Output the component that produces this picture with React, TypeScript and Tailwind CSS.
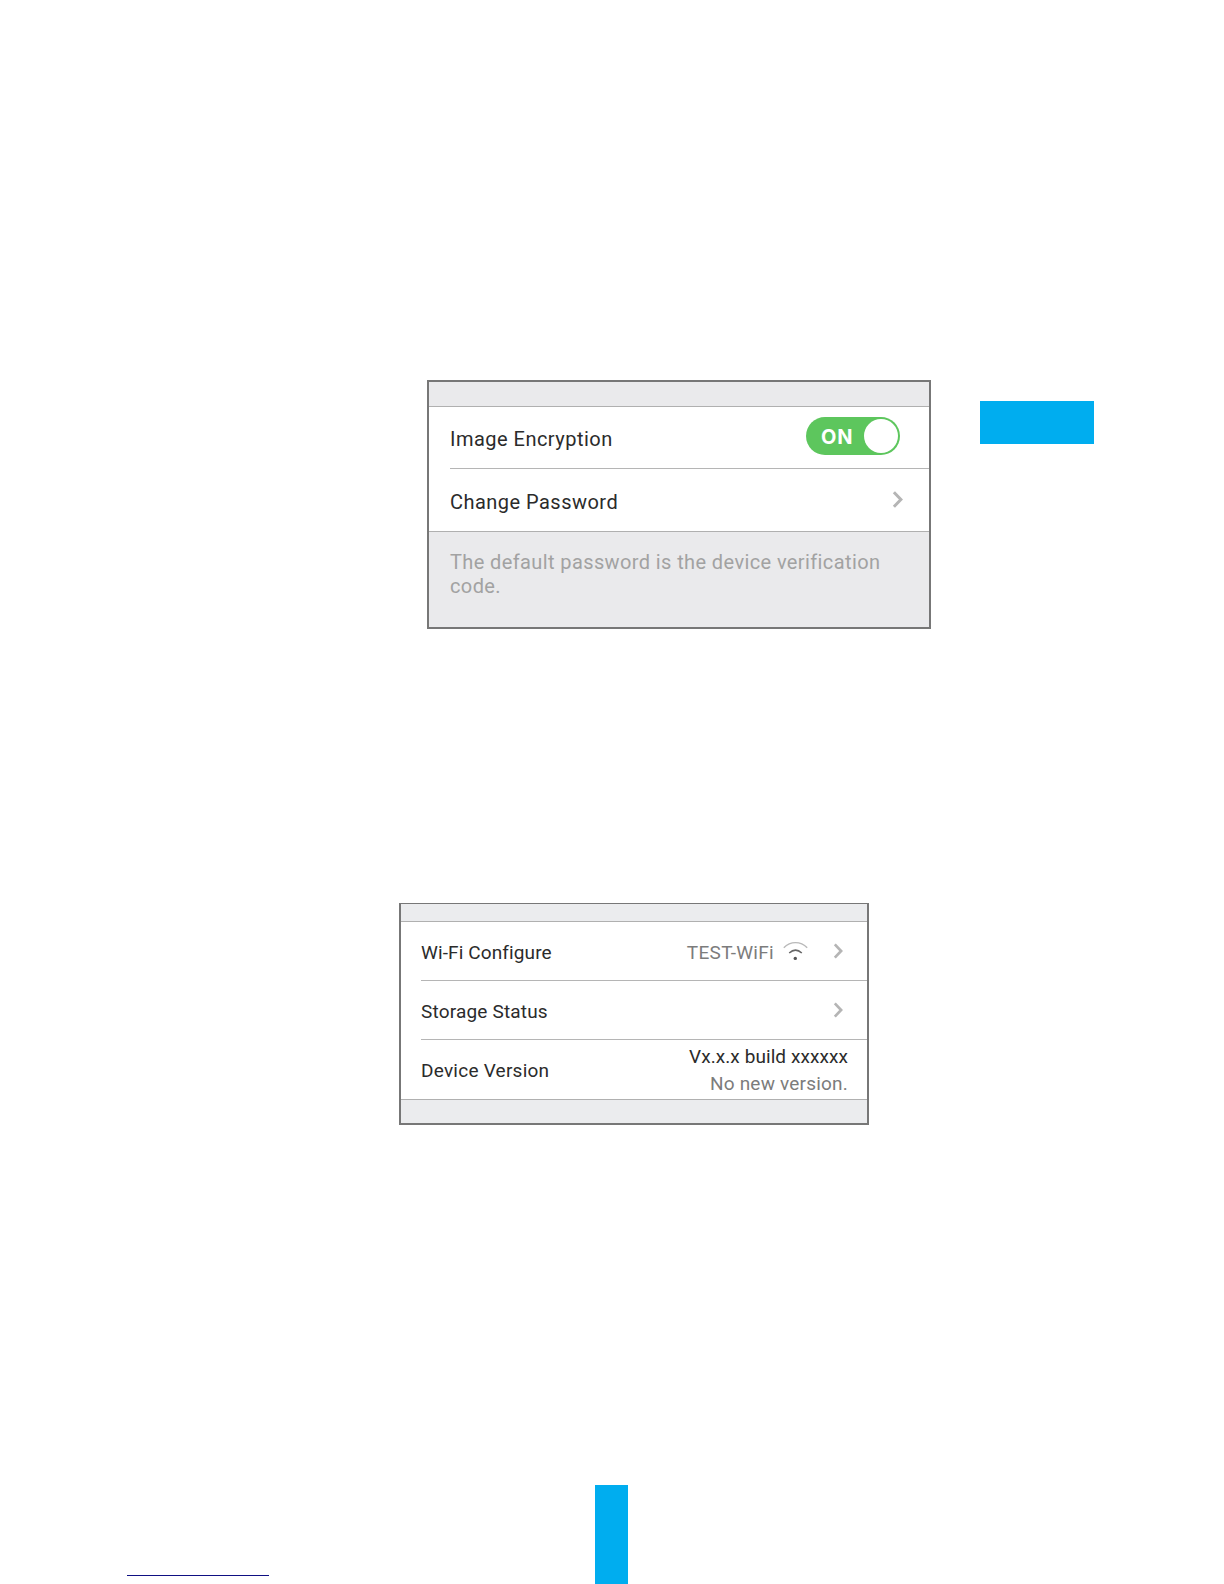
import type { ReactNode } from "react";

function Chevron({ className }: { className: string }) {
  return (
    <svg viewBox="0 0 10 17" fill="none" stroke="#b5b5b5" strokeWidth="3" className={`overflow-visible ${className}`}>
      <path d="M0.9 1.2 L7.9 8.5 L0.9 15.8" />
    </svg>
  );
}

function WifiIcon() {
  return (
    <svg viewBox="0 0 25 20" fill="none" className="h-5 w-[25px]">
      <path d="M0.8 6.8 Q5.8 1.6 12.5 1.6 Q19.2 1.6 24.2 6.8" stroke="#b9b9b9" strokeWidth="1.4" />
      <path d="M6.2 12 Q12.5 6.2 18.8 12" stroke="#666" strokeWidth="1.5" />
      <circle cx="12.3" cy="17.4" r="1.7" fill="#555" />
    </svg>
  );
}

function Row({ className, children }: { className: string; children: ReactNode }) {
  return <div className={`flex items-start justify-between ${className}`}>{children}</div>;
}

function EncryptionPanel() {
  return (
    <section className="h-[249px] w-[504px] border-2 border-[#777777] bg-[#eaeaec] text-[20px] leading-6">
      <div className="mt-6 border-y border-[#b0b0b0] bg-white pl-[21px] text-[#2b2b2b]">
        <Row className="h-[62px] border-b border-[#b5b5b5] pr-[29px]">
          <span className="mt-5 tracking-[0.48px]">Image Encryption</span>
          <div className="mt-[10px] flex h-[38px] w-[94px] items-center justify-between rounded-full bg-[#5dc65d] pr-[2px] pl-[15px]">
            <span className="mt-px font-['Inter'] text-[20px] font-bold tracking-[0.8px] text-white">ON</span>
            <span className="size-[34.5px] rounded-full bg-white" />
          </div>
        </Row>
        <Row className="h-[62px] pr-[26px]">
          <span className="mt-[21px] tracking-[0.47px]">Change Password</span>
          <Chevron className="mt-[22px] h-[17px] w-[10px]" />
        </Row>
      </div>
      <p className="mt-[18px] pl-[21px] tracking-[0.39px] text-[#a2a2a2]">
        The default password is the device verification
        <br />
        code.
      </p>
    </section>
  );
}

function DevicePanel() {
  return (
    <section className="h-[222px] w-[470px] border-2 border-t border-[#777777] bg-[#ebecee] text-[19px] leading-6">
      <div className="mt-[17px] border-y border-[#b0b0b0] bg-white pl-5 text-[#2b2b2b]">
        <Row className="h-[59px] border-b border-[#b5b5b5] pr-6">
          <span className="mt-[19px] tracking-[0.12px]">Wi-Fi Configure</span>
          <div className="flex items-start">
            <span className="mt-[19px] tracking-[0.3px] text-[#7c7c7c]">TEST-WiFi</span>
            <div className="mt-[19px] ml-[9px]">
              <WifiIcon />
            </div>
            <Chevron className="mt-[21px] ml-[26px] h-4 w-[9px]" />
          </div>
        </Row>
        <Row className="h-[59px] border-b border-[#b5b5b5] pr-6">
          <span className="mt-[19px] tracking-[0.18px]">Storage Status</span>
          <Chevron className="mt-[21px] h-4 w-[9px]" />
        </Row>
        <Row className="h-[59px] pr-[19px]">
          <span className="mt-[19px] tracking-[0.24px]">Device Version</span>
          <div className="mt-[5px] text-right">
            <p className="h-[27px] tracking-[0.08px]">Vx.x.x build xxxxxx</p>
            <p className="tracking-[0.2px] text-[#7c7c7c]">No new version.</p>
          </div>
        </Row>
      </div>
    </section>
  );
}

export default function App() {
  return (
    <main className="flex h-[1584px] w-[1224px] flex-col overflow-hidden bg-white font-['Roboto',sans-serif]">
      <div className="mt-[380px] ml-[427px] flex items-start">
        <EncryptionPanel />
        <div className="mt-[21px] ml-[49px] h-[43px] w-[114px] bg-[#00adef]" />
      </div>

      <div className="mt-[274px] ml-[399px]">
        <DevicePanel />
      </div>

      {/* Page footer: link rule and page tab */}
      <div className="mt-auto ml-[127px] flex h-[99px] items-end">
        <div className="mb-2 h-px w-[142px] bg-[#0f1083]" />
        <div className="ml-[326px] h-full w-[33px] bg-[#00adef]" />
      </div>
    </main>
  );
}
